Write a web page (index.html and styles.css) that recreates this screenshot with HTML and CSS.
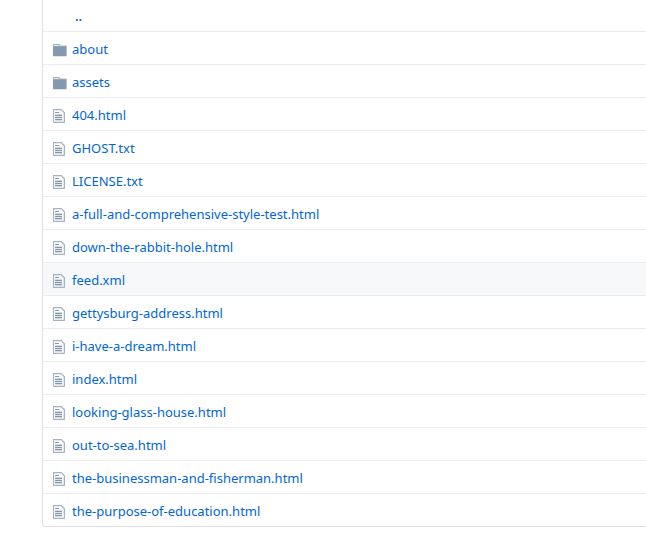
FILE: index.html
```
<!DOCTYPE html>
<html lang="en">
<head>
<meta charset="utf-8">
<title>Files</title>
<link rel="stylesheet" href="styles.css">
</head>
<body>
<svg class="sprite" aria-hidden="true">
  <symbol id="folder" viewBox="0 0 14 16"><path class="tab" fill-rule="evenodd" d="M0 2h6.500l.5 1.500h6.500V5H0zM1 3.200V4h5v-.8z"/><path d="M0 4.500h13c.4 0 .6.200.6.600V13.500c0 .5-.2.700-.7.700H.7c-.5 0-.7-.2-.7-.7z"/></symbol>
  <symbol id="file" viewBox="0 0 12 16"><path class="sheet" d="M12 4.500V14c0 .55-.45 1-1 1H0V1h8.500L12 4.500zM10.700 5L8 2.300H1V13.800h9.700z" fill-rule="evenodd"/><path class="shade" d="M2 6.500h7V12.500H2z"/><path d="M2 4h4v1H2zM2 6.800h7V8H2zM2 8.900h7v1.200H2zM2 11h7v1.200H2z"/></symbol>
</svg>
<main class="file-wrap">
<table class="files">
<tbody>
<tr class="up"><td class="icon"></td><td class="name"><a href="#" class="up-link">..</a></td></tr>
<tr><td class="icon"><svg class="octicon folder"><use href="#folder"/></svg></td><td class="name"><a href="#">about</a></td></tr>
<tr><td class="icon"><svg class="octicon folder"><use href="#folder"/></svg></td><td class="name"><a href="#">assets</a></td></tr>
<tr><td class="icon"><svg class="octicon"><use href="#file"/></svg></td><td class="name"><a href="#">404.html</a></td></tr>
<tr><td class="icon"><svg class="octicon"><use href="#file"/></svg></td><td class="name"><a href="#">GHOST.txt</a></td></tr>
<tr><td class="icon"><svg class="octicon"><use href="#file"/></svg></td><td class="name"><a href="#">LICENSE.txt</a></td></tr>
<tr><td class="icon"><svg class="octicon"><use href="#file"/></svg></td><td class="name"><a href="#">a-full-and-comprehensive-style-test.html</a></td></tr>
<tr><td class="icon"><svg class="octicon"><use href="#file"/></svg></td><td class="name"><a href="#">down-the-rabbit-hole.html</a></td></tr>
<tr class="active"><td class="icon"><svg class="octicon"><use href="#file"/></svg></td><td class="name"><a href="#">feed.xml</a></td></tr>
<tr><td class="icon"><svg class="octicon"><use href="#file"/></svg></td><td class="name"><a href="#">gettysburg-address.html</a></td></tr>
<tr><td class="icon"><svg class="octicon"><use href="#file"/></svg></td><td class="name"><a href="#">i-have-a-dream.html</a></td></tr>
<tr><td class="icon"><svg class="octicon"><use href="#file"/></svg></td><td class="name"><a href="#">index.html</a></td></tr>
<tr><td class="icon"><svg class="octicon"><use href="#file"/></svg></td><td class="name"><a href="#">looking-glass-house.html</a></td></tr>
<tr><td class="icon"><svg class="octicon"><use href="#file"/></svg></td><td class="name"><a href="#">out-to-sea.html</a></td></tr>
<tr><td class="icon"><svg class="octicon"><use href="#file"/></svg></td><td class="name"><a href="#">the-businessman-and-fisherman.html</a></td></tr>
<tr><td class="icon"><svg class="octicon"><use href="#file"/></svg></td><td class="name"><a href="#">the-purpose-of-education.html</a></td></tr>
</tbody>
</table>
</main>
</body>
</html>
```
FILE: styles.css
```
* {
  box-sizing: border-box;
}

body {
  margin: 0;
  background: #fff;
  font: 13px/20px "Segoe UI", "Noto Sans", "Open Sans", sans-serif;
}

.sprite {
  display: none;
}

.file-wrap {
  margin-left: 42px;
  border: 1px solid #dfe2e5;
  border-width: 0 0 1px 1px;
  border-bottom-left-radius: 3px;
}

.files {
  width: 100%;
  border-collapse: separate;
  border-spacing: 0;
}

.files td {
  padding: 7px 3px 5px;
  border-top: 1px solid #eaecef;
}

.files .icon {
  width: 26px;
  padding: 10px 0 6px 10px;
}

.files .up td {
  padding-top: 6px;
  border-top: 0;
}

.active {
  background: #f6f8fa;
}

.octicon {
  display: block;
  width: 12px;
  height: 16px;
  fill: #8498b0;
}

.folder {
  width: 14px;
}

.tab,
.sheet {
  fill: #a3b2c4;
}

.shade {
  fill: #dce3ea;
}

a {
  color: #0366d6;
  text-decoration: none;
}

.up-link {
  padding-left: 3px;
  font-weight: 600;
}
```
